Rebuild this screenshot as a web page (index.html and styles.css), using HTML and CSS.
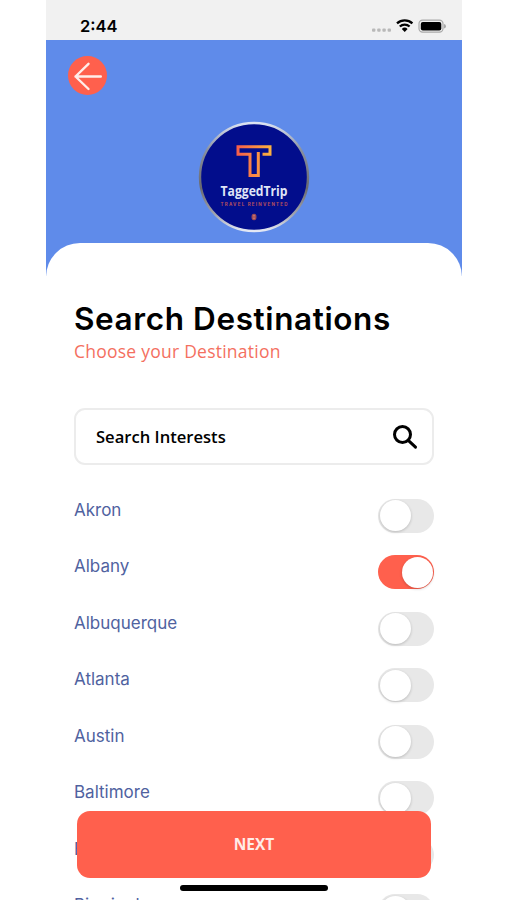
FILE: index.html
```html
<!DOCTYPE html>
<html lang="en">
<head>
    <meta charset="UTF-8">
    <meta name="viewport" content="width=device-width, initial-scale=1.0">
    <title>Search Destinations</title>
    <link rel="stylesheet" href="styles.css">
</head>
<body>
    <div class="phone">
        <div class="status-bar">
            <span class="time">2:44</span>
            <svg class="status-icons" width="76" height="16" viewBox="0 0 76 16">
                <g fill="#b9b9b9">
                    <rect x="2" y="10.4" width="3.4" height="3.4" rx="1"/>
                    <rect x="7.2" y="10.4" width="3.4" height="3.4" rx="1"/>
                    <rect x="12.4" y="10.4" width="3.4" height="3.4" rx="1"/>
                    <rect x="17.6" y="10.4" width="3.4" height="3.4" rx="1"/>
                </g>
                <g fill="none" stroke="#000" stroke-width="2.3">
                    <path d="M27 5.300a11.5 11.5 0 0 1 15.4 0"/>
                    <path d="M29.8 8.500a7.2 7.2 0 0 1 9.8 0"/>
                </g>
                <path d="M31.8 10.900a4.3 4.3 0 0 1 5.8 0l-2.9 3.1z"/>
                <rect x="49" y="2.200" width="24" height="12" rx="3.6" fill="#f1f1f1" stroke="#a9a9a9" stroke-width="1.2"/>
                <rect x="50.8" y="4" width="20.5" height="8.5" rx="2"/>
                <path d="M74 6v4.500q2-.6 2-2.25t-2-2.25z" fill="#a9a9a9"/>
            </svg>
        </div>

        <div class="header">
            <button class="back" aria-label="Back">
                <svg width="39" height="39" viewBox="0 0 39 39" fill="none" stroke="#ffeeea" stroke-width="2.4" stroke-linecap="round" stroke-linejoin="round">
                    <path d="M32.800 20.500H7.500M20.500 7.800L7.500 20.500L20.500 33"/>
                </svg>
            </button>
            <svg class="logo" width="112" height="112" viewBox="0 0 112 112">
                <defs>
                    <linearGradient id="ring" x1="0" y1="0" x2="0" y2="1">
                        <stop offset="0" stop-color="#dce3f3"/>
                        <stop offset=".25" stop-color="#8890a0"/>
                        <stop offset=".6" stop-color="#69696f"/>
                        <stop offset=".85" stop-color="#a2a5b0"/>
                        <stop offset="1" stop-color="#e4e9f5"/>
                    </linearGradient>
                    <linearGradient id="mark" x1="0" y1="0" x2="1" y2="0">
                        <stop offset="0" stop-color="#f75f4a"/>
                        <stop offset="1" stop-color="#fbb040"/>
                    </linearGradient>
                </defs>
                <circle cx="56" cy="56" r="54" fill="#020d8c" stroke="url(#ring)" stroke-width="2.4"/>
                <path d="M64.500 33.200H72V25.700H40V33.200H52V54.600H60.300V31" fill="none" stroke="url(#mark)" stroke-width="3"/>
                <text class="logo-name" x="56" y="74.800" textLength="67" lengthAdjust="spacingAndGlyphs">TaggedTrip</text>
                <text class="logo-tag" x="56" y="84.800" textLength="67">TRAVEL REINVENTED</text>
                <ellipse cx="56" cy="96" rx="2.500" ry="3.200" fill="#a04c58"/>
                <path d="M55 94.500h2M55 96h2M55 97.500h2" stroke="#d18a80" stroke-width=".6"/>
            </svg>
        </div>

        <div class="sheet">
            <h1 class="title">Search Destinations</h1>
            <p class="subtitle">Choose your Destination</p>

            <div class="search">
                <span class="search-text">Search Interests</span>
                <svg width="26" height="26" viewBox="0 0 26 26" fill="none" stroke="#000" stroke-width="3" stroke-linecap="round">
                    <circle cx="10.500" cy="10.500" r="8"/>
                    <path d="M16.800 16.800L23.500 23.200"/>
                </svg>
            </div>

            <div class="list">
                <div class="row"><span class="city">Akron</span><span class="toggle"></span></div>
                <div class="row"><span class="city">Albany</span><span class="toggle on"></span></div>
                <div class="row"><span class="city">Albuquerque</span><span class="toggle"></span></div>
                <div class="row"><span class="city">Atlanta</span><span class="toggle"></span></div>
                <div class="row"><span class="city">Austin</span><span class="toggle"></span></div>
                <div class="row"><span class="city">Baltimore</span><span class="toggle"></span></div>
                <div class="row"><span class="city">Baton Rouge</span><span class="toggle"></span></div>
                <div class="row"><span class="city">Birmingham</span><span class="toggle"></span></div>
            </div>
        </div>

        <button class="next">NEXT</button>
        <div class="home-bar"></div>
    </div>
</body>
</html>
```

FILE: styles.css
```css
* {
    box-sizing: border-box;
}

body {
    margin: 0;
    background-color: #fff;
    font-family: Inter, "Liberation Sans", sans-serif;
}

.phone {
    position: relative;
    width: 416px;
    height: 900px;
    margin-left: 46px;
    overflow: hidden;
}

.status-bar {
    display: flex;
    justify-content: space-between;
    align-items: center;
    height: 40px;
    padding: 12px 16px 0 34px;
    background-color: #f1f1f1;
}

.time {
    font-size: 16.5px;
    font-weight: 600;
    line-height: 20px;
}

.header {
    display: flex;
    justify-content: center;
    height: 236px;
    padding-top: 81px;
    background-color: #5f8bea;
}

.back {
    position: absolute;
    left: 22px;
    top: 56px;
    width: 39px;
    height: 39px;
    padding: 0;
    border: none;
    border-radius: 50%;
    background-color: #ff604d;
}

.back svg {
    display: block;
}

.logo-name {
    font-family: "Open Sans", sans-serif;
    font-size: 14px;
    font-weight: 700;
    fill: #dfe4f6;
    text-anchor: middle;
}

.logo-tag {
    font-size: 4.5px;
    font-weight: 700;
    fill: #b5505c;
    text-anchor: middle;
}

.sheet {
    position: relative;
    height: 657px;
    margin-top: -33px;
    padding: 56px 28px 0;
    border-radius: 34px 34px 0 0;
    background-color: #fff;
}

.title {
    margin: 0;
    font-size: 31.5px;
    font-weight: 600;
    line-height: 39px;
    letter-spacing: 0.6px;
    white-space: nowrap;
}

.subtitle {
    margin: 0;
    font-family: "Open Sans", sans-serif;
    font-size: 17.5px;
    line-height: 26px;
    letter-spacing: 0.24px;
    color: #f4705f;
}

.search {
    display: flex;
    justify-content: space-between;
    align-items: center;
    height: 57px;
    margin-top: 44px;
    padding: 0 14px 0 20px;
    border: 2px solid #ececec;
    border-radius: 11px;
}

.search-text {
    font-family: "Open Sans", sans-serif;
    font-size: 16.6px;
    font-weight: 600;
}

.list {
    padding-top: 33.8px;
}

.row {
    display: flex;
    justify-content: space-between;
    height: 56.5px;
}

.city {
    font-size: 17px;
    line-height: 22px;
    color: #50629f;
}

.toggle {
    display: flex;
    width: 56px;
    height: 34px;
    padding: 1.5px;
    border-radius: 17px;
    background-color: #e8e8e8;
}

.toggle::before {
    content: "";
    width: 31px;
    height: 31px;
    border-radius: 50%;
    background-color: #fff;
    box-shadow: 0 1px 3px rgba(0, 0, 0, 0.2);
}

.toggle.on {
    justify-content: flex-end;
    background-color: #ff604d;
}

/* floats over the list */
.next {
    position: absolute;
    left: 31px;
    top: 811px;
    width: 354px;
    height: 67px;
    padding: 0 0 2px;
    border: none;
    border-radius: 13px;
    background-color: #ff604d;
    color: #ffece8;
    font-family: "Open Sans", sans-serif;
    font-size: 15.5px;
    font-weight: 700;
}

.home-bar {
    position: absolute;
    left: 134px;
    top: 885px;
    width: 148px;
    height: 6px;
    border-radius: 3px;
    background-color: #000;
}
```
